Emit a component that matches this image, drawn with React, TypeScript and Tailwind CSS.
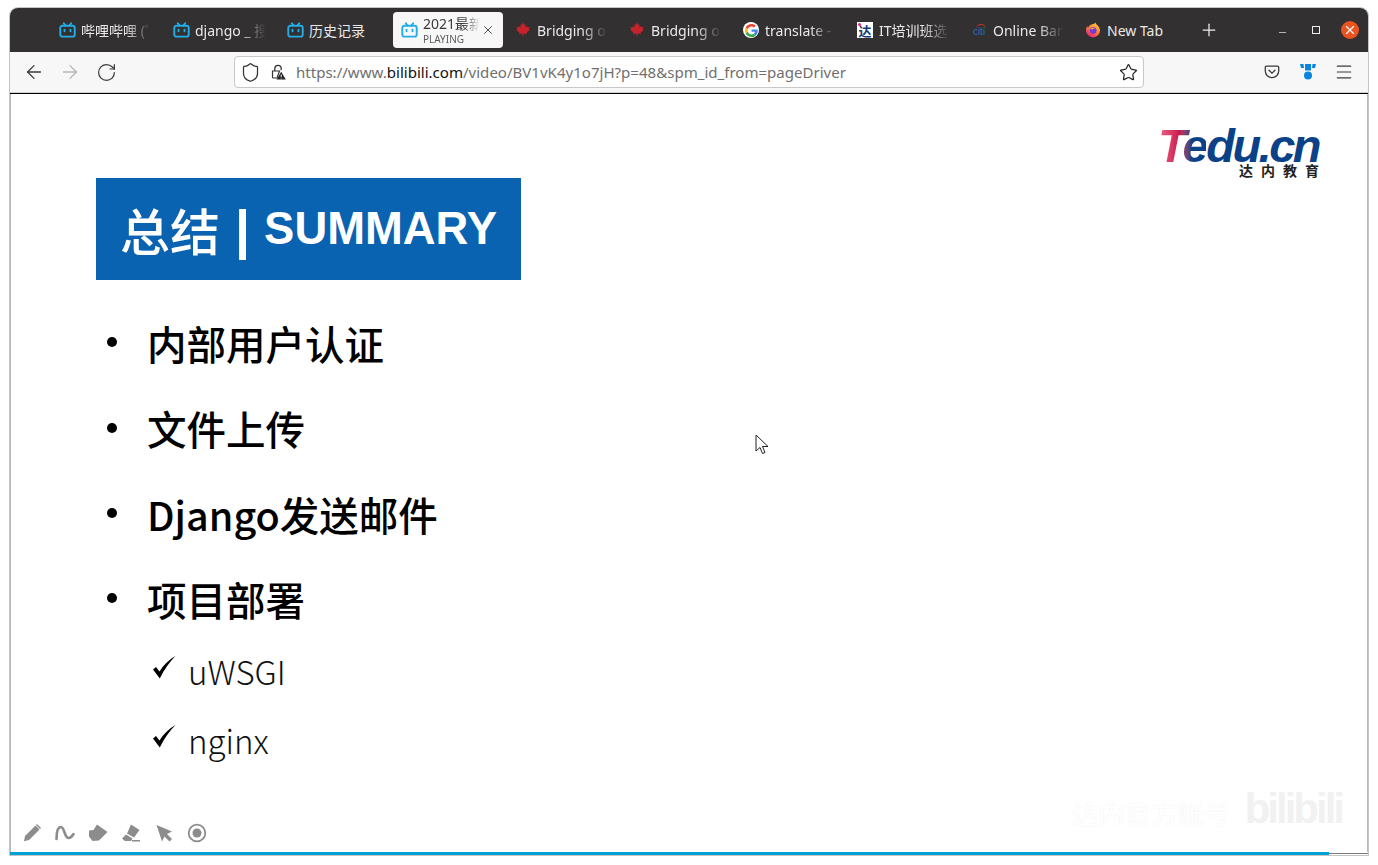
import { ArrowLeft, ArrowRight, Menu, Minus, Plus, RotateCw, Shield, Star, X } from "lucide-react";

const uiFont = "font-['Noto_Sans','Noto_Sans_CJK_SC',sans-serif]";
const slideFont = "font-['Noto_Sans_CJK_SC',sans-serif]";

function BiliIcon() {
  return (
    <svg viewBox="0 0 16 16" className="w-[17px] h-[17px] shrink-0 -mr-px" fill="none" stroke="#23ade5" strokeWidth="1.8">
      <path d="M4.5 1.2 6.2 3.4M11.5 1.2 9.8 3.4" strokeLinecap="round" />
      <rect x="1.2" y="3.6" width="13.6" height="10.2" rx="2" />
      <path d="M5.2 7.2v1.6M10.8 7.2v1.6" strokeLinecap="round" />
    </svg>
  );
}

function MapleIcon() {
  return (
    <svg viewBox="0 0 16 16" className="w-4 h-4 shrink-0" fill="#c8232c">
      <path d="M8 .6 6.7 3l-1.4-.7.6 3.4L4.3 4 3.9 5.3 1.6 5l.7 2.3-1.1.6 3.3 2.7-.5 1.4 3.4-.5.3 3.1h.6l.3-3.1 3.4.5-.5-1.4 3.3-2.7-1.1-.6.7-2.3-2.3.3L11.7 4l-1.6 1.7.6-3.4-1.4.7z" />
    </svg>
  );
}

function GoogleIcon() {
  return (
    <span className="w-4 h-4 shrink-0 rounded-full bg-white flex items-center justify-center">
      <svg viewBox="0 0 48 48" className="w-[13px] h-[13px]">
        <path fill="#EA4335" d="M24 9.5c3.54 0 6.71 1.22 9.21 3.6l6.85-6.85C35.9 2.38 30.47 0 24 0 14.62 0 6.51 5.38 2.56 13.22l7.98 6.19C12.43 13.72 17.74 9.5 24 9.5z" />
        <path fill="#4285F4" d="M46.98 24.55c0-1.57-.15-3.09-.38-4.55H24v9.02h12.94c-.58 2.96-2.26 5.48-4.78 7.18l7.73 6c4.51-4.18 7.09-10.36 7.09-17.65z" />
        <path fill="#FBBC05" d="M10.53 28.59c-.48-1.45-.76-2.99-.76-4.59s.27-3.14.76-4.59l-7.98-6.19C.92 16.46 0 20.12 0 24c0 3.88.92 7.54 2.56 10.78l7.97-6.19z" />
        <path fill="#34A853" d="M24 48c6.48 0 11.93-2.13 16.06-5.81l-7.73-6c-2.15 1.45-4.92 2.3-8.33 2.3-6.26 0-11.57-4.22-13.47-9.91l-7.98 6.19C6.51 42.62 14.62 48 24 48z" />
      </svg>
    </span>
  );
}

function TarenaIcon() {
  return (
    <span className="relative w-4 h-4 shrink-0 bg-white flex items-center justify-center text-[13px] leading-none font-bold text-[#123a72] font-['Noto_Sans_CJK_SC',sans-serif]">
      达
      <span className="absolute left-px top-px w-[3px] h-[3px] rounded-full bg-[#e6287c]" />
    </span>
  );
}

function CitiIcon() {
  return (
    <span className="relative w-4 h-4 shrink-0 flex items-end justify-center text-[#1b6fb5] text-[10px] leading-[13px] font-['Liberation_Sans',sans-serif]">
      citi
      <span className="absolute left-[5px] top-[2px] w-[10px] h-[5px] border-t border-[#d8312c] rounded-t-full" />
    </span>
  );
}

function FirefoxIcon() {
  return (
    <svg viewBox="0 0 16 16" className="w-4 h-4 shrink-0">
      <defs>
        <linearGradient id="ffOuter" x1="0.8" y1="0" x2="0.2" y2="1">
          <stop offset="0" stopColor="#ffd43b" />
          <stop offset="0.55" stopColor="#ff7139" />
          <stop offset="1" stopColor="#e31587" />
        </linearGradient>
      </defs>
      <path fill="url(#ffOuter)" d="M10.6.6c.2 1.4 1 2 2 3 1.3 1.3 2.4 2.8 2.4 4.8A7 7 0 1 1 1 8.4C1 6.8 1.5 5.2 2.4 4c0 .9.3 1.5.8 1.8.5-1.8 2-3.3 4-3.5 1.3-.2 2.7-.7 3.4-1.7z" />
      <circle cx="8.2" cy="8.6" r="3.3" fill="#6f3bd6" />
      <path fill="#ffb03a" d="M5 6.5c1.5-.8 3.8-.9 5.3.3-1.3-.3-2.3 0-2.9.6L5 6.5z" />
    </svg>
  );
}

const tabs = [
  { title: "哔哩哔哩 (゜", icon: <BiliIcon /> },
  { title: "django _ 搜索", icon: <BiliIcon /> },
  { title: "历史记录", icon: <BiliIcon />, noFade: true },
  { title: "2021最新", icon: <BiliIcon />, active: true },
  { title: "Bridging ope", icon: <MapleIcon /> },
  { title: "Bridging ope", icon: <MapleIcon /> },
  { title: "translate - G", icon: <GoogleIcon /> },
  { title: "IT培训班选择", icon: <TarenaIcon /> },
  { title: "Online Bank", icon: <CitiIcon /> },
  { title: "New Tab", icon: <FirefoxIcon />, noFade: true },
];

function TabBar() {
  return (
    <div className={`h-11 bg-[#333031] rounded-t-[8px] flex items-center pl-[39px] ${uiFont}`}>
      {tabs.map((tab, i) =>
        tab.active ? (
          <div key={i} className="w-[110px] h-9 mx-0.5 bg-[#f7f7f7] rounded-[4px] flex items-center pl-2 shrink-0">
            <BiliIcon />
            <div className="w-[57px] ml-[6px] overflow-hidden [mask-image:linear-gradient(to_right,black_70%,transparent)]">
              <div className="text-[14px] leading-[18px] mt-px whitespace-nowrap text-[#3a3a3a]">{tab.title}</div>
              <div className="text-[10px] leading-[13px] whitespace-nowrap text-[#5c5c5c]">PLAYING</div>
            </div>
            <X className="w-3.5 h-3.5 ml-px text-[#333333]" strokeWidth={1.5} />
          </div>
        ) : (
          <div key={i} className="w-[110px] h-9 mx-0.5 flex items-center pl-2 shrink-0">
            {tab.icon}
            <span
              className={`ml-[6px] w-[72px] overflow-hidden whitespace-nowrap text-[14px] text-[#e9e9e9] ${tab.noFade ? "" : "[mask-image:linear-gradient(to_right,black_62%,transparent_98%)]"}`}
            >
              {tab.title}
            </span>
          </div>
        )
      )}
      <Plus className="w-5 h-5 ml-[10px] text-[#eeeeee]" strokeWidth={1.5} />
      <div className="ml-auto flex items-center pr-[9px]">
        <Minus className="w-[11px] h-[11px] mr-[24px] mt-[4px] text-[#eeeeee]" strokeWidth={1.5} />
        <span className="w-2 h-2 mr-[21px] border border-[#eeeeee]" />
        <span className="w-[18px] h-[18px] rounded-full bg-[#e95420] flex items-center justify-center">
          <X className="w-3.5 h-3.5 text-white" strokeWidth={2} />
        </span>
      </div>
    </div>
  );
}

function LockWarning() {
  return (
    <svg viewBox="0 0 16 16" className="w-4 h-4 shrink-0" fill="none">
      <path d="M4.8 7V4.5a3.2 3.2 0 0 1 6.4 0V6" stroke="#333" strokeWidth="1.3" />
      <path d="M2.5 7h7l-2.5 7H3.5a1 1 0 0 1-1-1z" stroke="#333" strokeWidth="1.2" />
      <path d="M11.2 7.8 15.8 15.5H6.6z" fill="#222" />
      <path d="M11.2 10.5v2.4M11.2 13.7v.8" stroke="#fff" strokeWidth="1" />
    </svg>
  );
}

function NavBar() {
  return (
    <div className="h-[41px] bg-[#f7f7f7] border-b border-[#cfcfcf] flex items-center px-1.5">
      <div className="w-9 flex justify-center">
        <ArrowLeft className="w-[22px] h-[22px] text-[#3a3a3a]" strokeWidth={1.4} />
      </div>
      <div className="w-9 flex justify-center">
        <ArrowRight className="w-[22px] h-[22px] text-[#b5b5b5]" strokeWidth={1.4} />
      </div>
      <div className="w-9 flex justify-center">
        <RotateCw className="w-[21px] h-[21px] text-[#3a3a3a]" strokeWidth={1.4} />
      </div>
      <div className="ml-[110px] w-[910px] h-[32px] bg-white border border-[#c8c8c8] rounded-[4px] flex items-center px-[5px]">
        <Shield className="w-[21px] h-[21px] text-[#333333]" strokeWidth={1.4} />
        <span className="ml-[9px]">
          <LockWarning />
        </span>
        <span className={`ml-[10px] text-[15.05px] whitespace-nowrap text-[#6f6f6f] ${uiFont}`}>
          https://www.<span className="text-[#111111]">bilibili.com</span>/video/BV1vK4y1o7jH?p=48&amp;spm_id_from=pageDriver
        </span>
        <Star className="w-[19px] h-[19px] ml-auto text-[#222222]" strokeWidth={1.5} />
      </div>
      <div className="ml-[110px] w-9 flex justify-center">
        <svg viewBox="0 0 16 16" className="w-4 h-4" fill="none" stroke="#3a3a3a" strokeWidth="1.3">
          <path d="M2.5 2.2h11a1.2 1.2 0 0 1 1.2 1.2V7a6.7 6.7 0 0 1-13.4 0V3.4a1.2 1.2 0 0 1 1.2-1.2z" />
          <path d="M5 6.3 8 9.2l3-2.9" strokeLinecap="round" />
        </svg>
      </div>
      <div className="w-9 flex justify-center">
        <svg viewBox="0 0 16 18" className="w-4 h-[18px]" fill="#0a84dc">
          <path d="M0 1h3.5l.5 4H1zM16 1h-3.5l-.5 4h3zM5 1h6v6.5H5z" />
          <circle cx="8" cy="12.5" r="4" />
        </svg>
      </div>
      <div className="w-9 flex justify-center">
        <Menu className="w-5 h-5 text-[#3a3a3a]" strokeWidth={1.4} />
      </div>
    </div>
  );
}

function TeduLogo() {
  return (
    <div className="w-[161px] flex flex-col items-end">
      <div className="h-9 leading-9 whitespace-nowrap text-[47px] font-bold italic tracking-[-2.5px] font-['Liberation_Sans',sans-serif] text-[#0b4187]">
        <span className="bg-gradient-to-r from-[#f0628a] via-[#c9134f] via-45% to-[#0b4187] to-70% bg-clip-text text-transparent">Te</span>
        du.cn
      </div>
      <div className={`mr-[-8px] text-[14px] leading-[12px] font-bold tracking-[8px] text-[#222222] ${slideFont}`}>达内教育</div>
    </div>
  );
}

function Check() {
  return (
    <svg viewBox="0 0 24 24" className="w-6 h-6 shrink-0" fill="#000000">
      <path d="M1 14.5 4 12l3.5 4.5C11.5 10 17 4.8 23.5 1 17.5 7 12.5 14 7.8 23.5z" />
    </svg>
  );
}

const items = ["内部用户认证", "文件上传", "Django发送邮件", "项目部署"];
const subItems = ["uWSGI", "nginx"];

function Slide() {
  return (
    <div className={`relative flex-1 flex flex-col bg-white border-x border-[#b9b9b9] ${slideFont}`}>
      <div className="flex justify-between items-start pl-[85px] pr-[48px] pt-[34px]">
        <div className="mt-[50px] w-[425px] h-[102px] bg-[#0a63b0] flex items-center pl-[24px] text-white font-['Liberation_Sans',sans-serif]">
          <span className={`text-[50px] font-medium ${slideFont}`}>总结</span>
          <span className="ml-[15px] text-[54px] leading-none font-bold">|</span>
          <span className="ml-[14px] text-[45.4px] font-bold">SUMMARY</span>
        </div>
        <TeduLogo />
      </div>
      <ul className="mt-[20px] pl-[96px]">
        {items.map((item) => (
          <li key={item} className="h-[85.4px] flex items-center">
            <span className="w-[10px] h-[10px] rounded-full bg-black mt-[-1px] mr-[30px]" />
            <span className="text-[39.5px] font-medium leading-none text-black">{item}</span>
          </li>
        ))}
      </ul>
      <ul className="mt-[-5px] pl-[141px]">
        {subItems.map((item) => (
          <li key={item} className="h-[69px] flex items-center">
            <span className="mt-[-8px]">
              <Check />
            </span>
            <span className="ml-[12px] text-[33px] font-light leading-none text-[#111111]">{item}</span>
          </li>
        ))}
      </ul>
      <div className="mt-auto flex items-center gap-[13px] pl-[11px] pb-[9px]">
        <svg viewBox="0 0 20 20" className="w-5 h-5" fill="#8c8c8c">
          <path d="M13.5 2.5 17.5 6.5 7 17l-5 1.2L3 13zM15 1l4 4-1 1-4-4z" />
        </svg>
        <svg viewBox="0 0 20 20" className="w-5 h-5" fill="none" stroke="#8c8c8c" strokeWidth="2.6" strokeLinecap="round">
          <path d="M1.5 16C1.5 8 3 4 6 4c3.5 0 3.5 11 7.5 11 2 0 3.5-1.5 5-4" />
        </svg>
        <svg viewBox="0 0 20 20" className="w-5 h-5" fill="#8c8c8c">
          <path d="M9 1.5 19.5 9 11 17.5 4.5 18 1 13.5V7.5l4.5-.5z" />
        </svg>
        <svg viewBox="0 0 20 20" className="w-5 h-5" fill="#8c8c8c">
          <path d="M10 1.5 18.5 7 13 14.5 6 10.5z" />
          <path d="M5 11.5l6.5 4-1.5 2.5H4l-3-2.5zM11 17h8v1.5h-8z" />
        </svg>
        <svg viewBox="0 0 20 20" className="w-5 h-5" fill="#8c8c8c">
          <path d="M2.5 2 18 8.5l-5 2.5 5 5-2.5 2.5-5-5L8 18.5z" />
        </svg>
        <svg viewBox="0 0 20 20" className="w-5 h-5" fill="none" stroke="#8c8c8c" strokeWidth="1.8">
          <circle cx="10" cy="10" r="8.3" />
          <circle cx="10" cy="10" r="4.5" fill="#8c8c8c" stroke="none" />
        </svg>
      </div>
      {/* faint bilibili watermark over the video */}
      <div className="absolute right-[25px] bottom-[22px] flex items-end pointer-events-none">
        <span className="text-[26.5px] leading-[30px] mb-[2px] text-white [text-shadow:0_0_2px_#eeeeee]">达内官方账号</span>
        <span className="ml-[14px] text-[42px] leading-[42px] font-bold tracking-[-3px] text-[#f1f1f1] font-['Liberation_Sans',sans-serif]">bilibili</span>
      </div>
      {/* mouse pointer captured in the recording */}
      <svg viewBox="0 0 14 22" className="absolute left-[744px] top-[340px] w-[14px] h-[22px]" fill="#ffffff" stroke="#222222" strokeWidth="1">
        <path d="M1 1v16l4-3.5 2.5 6 2.5-1-2.500-6H13z" />
      </svg>
    </div>
  );
}

export default function App() {
  return (
    <div className="w-[1378px] h-[865px] bg-white pt-2 pl-2.5 pr-2.5 pb-2.5 overflow-hidden">
      <div className="h-full flex flex-col shadow-[0_0_0_1px_#c4c4c4] rounded-t-[8px]">
        <TabBar />
        <NavBar />
        <div className="h-px bg-black" />
        <Slide />
        <div className="flex h-[3px]">
          <div className="w-[1319px] bg-[#00a1d6]" />
          <div className="flex-1 mt-[1px] h-[1px] bg-[#7a7a7a]" />
        </div>
      </div>
    </div>
  );
}
